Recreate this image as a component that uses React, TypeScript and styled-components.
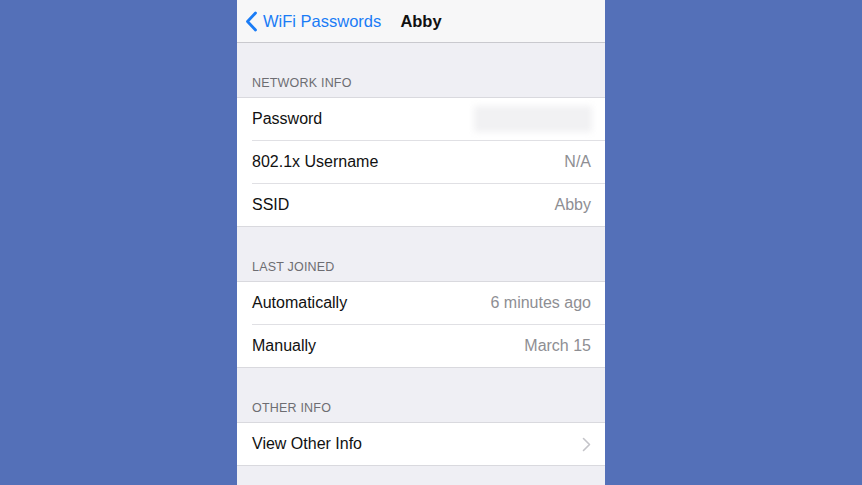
import React, { FC } from 'react';
import styled, { createGlobalStyle } from 'styled-components';

const GlobalStyle = createGlobalStyle`
  html, body {
    margin: 0;
    padding: 0;
    background: #5470b8;
  }
  * {
    box-sizing: border-box;
  }
`;

const Page = styled.div`
  width: 862px;
  height: 485px;
  overflow: hidden;
  padding-left: 237px;
  background: #5470b8;
  font-family: 'Liberation Sans', Arial, sans-serif;
`;

const Phone = styled.div`
  width: 368px;
  height: 485px;
  background: #efeff4;
  display: flex;
  flex-direction: column;
`;

const NavBar = styled.div`
  height: 43px;
  flex-shrink: 0;
  background: #f7f7f8;
  border-bottom: 1px solid #c9c9ce;
  display: grid;
  grid-template-columns: 1fr auto 1fr;
  align-items: center;
`;

const BackButton = styled.div`
  display: flex;
  align-items: center;
  gap: 5px;
  padding-left: 8px;
  color: #1a7cf6;
  font-size: 16.5px;
`;

const Title = styled.div`
  font-size: 16.5px;
  font-weight: 700;
  color: #111;
`;

const SectionHeader = styled.div`
  height: 54px;
  flex-shrink: 0;
  padding: 0 15px 7px;
  display: flex;
  align-items: flex-end;
  font-size: 12.5px;
  color: #6d6d72;
  letter-spacing: 0.2px;
`;

const Group = styled.div`
  flex-shrink: 0;
  background: #fff;
  border-top: 1px solid #d9d9de;
  border-bottom: 1px solid #d9d9de;
  padding-left: 15px;
`;

const Row = styled.div<{ $last?: boolean }>`
  height: ${({ $last }) => ($last ? '42px' : '43px')};
  display: flex;
  align-items: center;
  justify-content: space-between;
  padding-right: 14px;
  border-bottom: ${({ $last }) => ($last ? 'none' : '1px solid #e0e0e4')};
  font-size: 16px;
`;

const Label = styled.span`
  color: #111;
`;

const Value = styled.span`
  color: #8e8e93;
`;

const Blurred = styled.div`
  width: 118px;
  height: 26px;
  background: #f1f1f3;
  filter: blur(3px);
  margin-right: -1px;
`;

const Chevron: FC = () => (
  <svg width="9" height="15" viewBox="0 0 9 15">
    <path d="M1.5 1.5 L7.5 7.5 L1.5 13.5" fill="none" stroke="#c4c4c9" strokeWidth="1.6" strokeLinecap="round" strokeLinejoin="round" />
  </svg>
);

const BackChevron: FC = () => (
  <svg width="13" height="21" viewBox="0 0 13 21">
    <path d="M10.5 2 L2.5 10.5 L10.5 19" fill="none" stroke="#1a7cf6" strokeWidth="2.8" strokeLinecap="round" strokeLinejoin="round" />
  </svg>
);

type Item = { label: string; value?: string; blurred?: boolean; chevron?: boolean };

const sections: { title: string; items: Item[] }[] = [
  {
    title: 'NETWORK INFO',
    items: [
      { label: 'Password', blurred: true },
      { label: '802.1x Username', value: 'N/A' },
      { label: 'SSID', value: 'Abby' },
    ],
  },
  {
    title: 'LAST JOINED',
    items: [
      { label: 'Automatically', value: '6 minutes ago' },
      { label: 'Manually', value: 'March 15' },
    ],
  },
  {
    title: 'OTHER INFO',
    items: [{ label: 'View Other Info', chevron: true }],
  },
];

const App: FC = () => (
  <>
    <GlobalStyle />
    <Page>
      <Phone>
        <NavBar>
          <BackButton>
            <BackChevron />
            WiFi Passwords
          </BackButton>
          <Title>Abby</Title>
          <div />
        </NavBar>
        {sections.map(section => (
          <React.Fragment key={section.title}>
            <SectionHeader>{section.title}</SectionHeader>
            <Group>
              {section.items.map((item, i) => (
                <Row key={item.label} $last={i === section.items.length - 1}>
                  <Label>{item.label}</Label>
                  {item.blurred && <Blurred />}
                  {item.value && <Value>{item.value}</Value>}
                  {item.chevron && <Chevron />}
                </Row>
              ))}
            </Group>
          </React.Fragment>
        ))}
      </Phone>
    </Page>
  </>
);

export default App;
